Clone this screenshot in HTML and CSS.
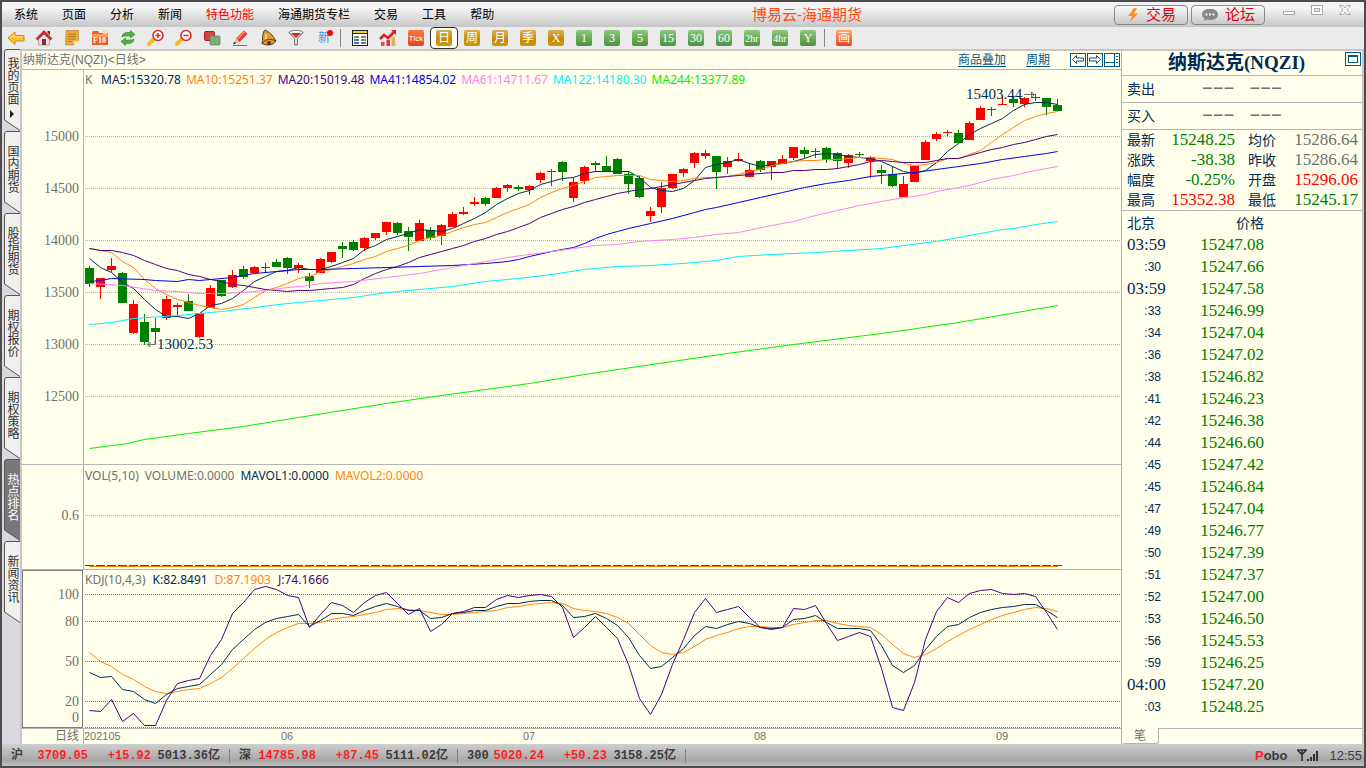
FILE: index.html
```html
<!DOCTYPE html>
<html lang="zh-CN">
<head>
<meta charset="utf-8">
<title>博易云-海通期货</title>
<link rel="stylesheet" href="styles.css">
</head>
<body>
<div class="app">
  <header class="titlebar">
    <nav class="menu">
      <button>系统</button><button>页面</button><button>分析</button><button>新闻</button><button class="hot">特色功能</button><button>海通期货专栏</button><button>交易</button><button>工具</button><button>帮助</button>
    </nav>
    <h1 class="brand">博易云-海通期货</h1>
    <div class="title-right">
      <button class="pill"><svg width="14" height="16" viewBox="0 0 14 16"><path d="M8 1L2 9h4l-2 6 8-8.500H8L11 1z" fill="#f7941d"/></svg>交易</button>
      <button class="pill"><svg width="18" height="14" viewBox="0 0 18 14"><path d="M9 1c5 0 8 2 8 5.500S14 12 9 12c-1 0-2 0-3-.4L3 13l.6-2.500C2 9.500 1 8 1 6.500 1 3 4 1 9 1z" fill="#888"/><path d="M4.500 5.500h2v2h-2zM8 5.500h2v2H8zM11.500 5.500h2v2h-2z" fill="#eee"/></svg>论坛</button>
      <div class="win">
        <button aria-label="最小化"><svg width="14" height="14"><rect x="1.500" y="6.500" width="11" height="3" fill="#fff" stroke="#a8a8a8"/></svg></button>
        <button aria-label="最大化"><svg width="14" height="14"><rect x="1.500" y=".5" width="11" height="9" fill="#fff" stroke="#a8a8a8"/><rect x="4.500" y="3.500" width="5" height="3" fill="#e8e8e8" stroke="#a8a8a8"/></svg></button>
        <button aria-label="关闭"><svg width="14" height="14"><path d="M1.500.5h3.500l2 2.500 2-2.500h3.500L8.800 5l3.700 4.500H9L7 7l-2 2.500H1.500L5.200 5z" fill="#fff" stroke="#a8a8a8"/></svg></button>
      </div>
    </div>
  </header>

  <div class="toolbar">
    <button aria-label="后退"><svg width="18" height="18"><path d="M1 9l7-6v3.500h9v5.500H8v3.500z" fill="#fbc02d" stroke="#c98a12"/><path d="M3 8.500l4-3V8h9" fill="none" stroke="#ffe690"/></svg></button>
    <button aria-label="主页"><svg width="18" height="18"><path d="M3.500 9v7h11V9L9 4z" fill="#e4e4ea" stroke="#aaa"/><path d="M1 9.500L9 1.500l8 8-1.500 1.500L9 5l-6.500 6z" fill="#d8272c" stroke="#8f1515" stroke-width=".6"/><path d="M12.500 2h2.500v4l-2.500-2z" fill="#a31b1b"/><rect x="7" y="10" width="4" height="6" fill="#7c3434"/></svg></button>
    <button aria-label="记事"><svg width="18" height="18"><path d="M3 1.500h12.500v10L11 16H2.500z" fill="#e9ab3c" stroke="#b9802a" stroke-width=".6"/><path d="M15.500 11.500L11 16v-3.500z" fill="#fff0b8"/><path d="M5 5h8M5 7.500h8M5 10h7M5 12.500h4" stroke="#b57c20"/></svg></button>
    <button aria-label="F10"><svg width="18" height="18"><path d="M1 4l1-2h5l1 2h9v12H1z" fill="#ee5d24"/><path d="M12 2l4-1v4h-4z" fill="#ffd98a"/><path d="M1 5h16v3H1z" fill="#ff9b5d"/><text x="2" y="14" class="f10">F10</text></svg></button>
    <button aria-label="刷新"><svg width="18" height="18"><path d="M3 8c0-3 2.500-4.500 6-4.500h2.500V1.500L16 5.500l-4.500 3.500V7H9C6 7 4 7 3 8z" fill="#4db43c" stroke="#2a8220" stroke-width=".6"/><path d="M15 10c0 3-2.500 4.500-6 4.500H6.500v2L2 12.500 6.500 9v2H9c3 0 5 0 6-1z" fill="#4db43c" stroke="#2a8220" stroke-width=".6"/></svg></button>
    <button aria-label="放大"><svg width="18" height="18"><path d="M7 10l-5 5" stroke="#f6bd22" stroke-width="4" stroke-linecap="round"/><circle cx="11" cy="6.500" r="5" fill="#fff" stroke="#d92a2a" stroke-width="1.600"/><path d="M8.500 6.500h5M11 4v5" stroke="#d92a2a" stroke-width="1.500"/></svg></button>
    <button aria-label="缩小"><svg width="18" height="18"><path d="M7 10l-5 5" stroke="#f6bd22" stroke-width="4" stroke-linecap="round"/><circle cx="11" cy="6.500" r="5" fill="#fff" stroke="#d92a2a" stroke-width="1.600"/><path d="M8.500 6.500h5" stroke="#d92a2a" stroke-width="1.500"/></svg></button>
    <button aria-label="叠加"><svg width="18" height="18"><rect x="1.500" y="2.500" width="10" height="9" rx="1" fill="#d9433f" stroke="#9e2422"/><rect x="7" y="7" width="10" height="9" rx="1" fill="#7dab7c" stroke="#5b8a5b" stroke-width=".8"/></svg></button>
    <button aria-label="画线"><svg width="18" height="18"><path d="M5 9.500L13 1.500l3.500 3.500-8 8z" fill="#e53a2c"/><path d="M6 10.500l8-8" stroke="#ff8c7a" stroke-width="1.500"/><path d="M5 9.500l3.500 3.500L2.500 15.500z" fill="#e8c48e"/><path d="M2 15.500l1.500-3 1.500 2z" fill="#333"/><path d="M2 16.500h14" stroke="#e44"/></svg></button>
    <button aria-label="预警"><svg width="18" height="18"><path d="M5 2c1-1.500 3-1 3 .5 4 1 6 5 9 9.500-3 4.500-9 5-14 2.500C4 11 3 6 5 2z" fill="#dd9a35" stroke="#6b3c10"/><path d="M3 14.500c4-5 9-5 14-2.500" fill="none" stroke="#6b3c10"/><circle cx="10" cy="14" r="2" fill="#6b2d0e"/><path d="M7 5v5" stroke="#ffe2a0" stroke-width="1.500"/></svg></button>
    <button aria-label="筛选"><svg width="18" height="18"><path d="M2 3.500l5.500 6V16h3V9.500l5.500-6z" fill="#d8d8dc" stroke="#777"/><ellipse cx="9" cy="3.500" rx="7" ry="2" fill="#fff" stroke="#777"/><path d="M4.500 4h9L9 9z" fill="#e0202a"/></svg></button>
    <button class="new" aria-label="新功能">新</button>
    <i class="sep"></i>
    <button aria-label="报价表"><svg width="18" height="18"><rect x="1.500" y="1.500" width="15" height="15" fill="#fff" stroke="#222"/><path d="M2 3h14" stroke="#f5cf32" stroke-width="2"/><path d="M2 4.500h14" stroke="#222"/><path d="M3 8h5M10 11h5" stroke="#1a8c1a" stroke-width="1.500"/><path d="M10 8h5" stroke="#d22" stroke-width="1.500"/><path d="M3 11h5M3 14h5M10 14h5" stroke="#224a9e" stroke-width="1.500"/></svg></button>
    <button aria-label="走势"><svg width="18" height="18"><path d="M1 10l4-4 4 3 7-7" fill="none" stroke="#e02020" stroke-width="2.500"/><path d="M12 1h5v5z" fill="#e02020"/><rect x="2" y="13" width="3.500" height="4" fill="#e05030"/><rect x="7.500" y="11" width="3.500" height="6" fill="#d43a3a"/><rect x="12.500" y="8" width="3.500" height="9" fill="#e8b040"/></svg></button>
    <button><span class="tile tick">Tick</span></button>
    <button class="on"><span class="tile gold">日</span></button>
    <button><span class="tile gold">周</span></button>
    <button><span class="tile gold">月</span></button>
    <button><span class="tile gold">季</span></button>
    <button><span class="tile gold num">X</span></button>
    <button><span class="tile green num">1</span></button>
    <button><span class="tile green num">3</span></button>
    <button><span class="tile green num">5</span></button>
    <button><span class="tile green num">15</span></button>
    <button><span class="tile green num">30</span></button>
    <button><span class="tile green num">60</span></button>
    <button><span class="tile green hr">2hr</span></button>
    <button><span class="tile green hr">4hr</span></button>
    <button><span class="tile green num">Y</span></button>
    <i class="sep"></i>
    <button><span class="tile orange">画</span></button>
  </div>

  <main class="body">
    <nav class="side">
      <button class="stab"><svg viewBox="0 0 16 82"><path d="M16 .5H3Q.5.5.5 3v68L16 81.500"/></svg><span>我的页面<i class="tri"></i></span></button>
      <button class="stab"><svg viewBox="0 0 16 82"><path d="M16 .5H3Q.5.5.5 3v68L16 81.500"/></svg><span>国内期货</span></button>
      <button class="stab"><svg viewBox="0 0 16 82"><path d="M16 .5H3Q.5.5.5 3v68L16 81.500"/></svg><span>股指期货</span></button>
      <button class="stab"><svg viewBox="0 0 16 82"><path d="M16 .5H3Q.5.5.5 3v68L16 81.500"/></svg><span>期权报价</span></button>
      <button class="stab"><svg viewBox="0 0 16 82"><path d="M16 .5H3Q.5.5.5 3v68L16 81.500"/></svg><span>期权策略</span></button>
      <button class="stab active"><svg viewBox="0 0 16 82"><path d="M16 .5H3Q.5.5.5 3v68L16 81.500"/></svg><span>热点排名</span></button>
      <button class="stab"><svg viewBox="0 0 16 82"><path d="M16 .5H3Q.5.5.5 3v68L16 81.500"/></svg><span>新闻资讯</span></button>
    </nav>

    <section class="chart">
      <div class="chart-head">
        <span class="name">纳斯达克(NQZI)&lt;日线&gt;</span>
        <a href="#overlay">商品叠加</a>
        <a href="#period">周期</a>
        <div class="boxes">
          <button aria-label="向左"><svg width="16" height="14"><rect x=".5" y=".5" width="15" height="13"/><path d="M2.500 6.500l4-4v2.500h7v3h-7v2.500z"/></svg></button>
          <button aria-label="向右"><svg width="16" height="14"><rect x=".5" y=".5" width="15" height="13"/><path d="M13.500 6.500l-4-4v2.500h-7v3h7v2.500z"/></svg></button>
          <button aria-label="布局"><svg width="16" height="14"><rect x=".5" y=".5" width="15" height="13"/><path d="M10.500 0v14M0 9.500h10M12 3.500h2M12 6.500h2M12 9.500h2"/></svg></button>
        </div>
      </div>

      <div class="pane pane-k">
        <svg class="axis"><text x="57" y="71">15000</text><text x="57" y="123">14500</text><text x="57" y="175">14000</text><text x="57" y="227">13500</text><text x="57" y="279">13000</text><text x="57" y="331">12500</text></svg>
        <div class="plot">
          <div class="legend"><span class="gray k">K</span><span class="navy">MA5:15320.78</span><span class="org">MA10:15251.37</span><span class="ind">MA20:15019.48</span><span class="blue">MA41:14854.02</span><span class="pink">MA61:14711.67</span><span class="cyan">MA122:14180.30</span><span class="lime">MA244:13377.89</span></div>
          <svg class="draw">
            <g class="grid"><path d="M1 48.500H4000M1 100.500H4000M1 152.500H4000M1 204.500H4000M1 256.500H4000M1 308.500H4000"/></g>
            <g id="candles" transform="translate(-84 -88)"></g>
            <g id="ma" class="line" transform="translate(-84 -88)"></g>
            <g transform="translate(-84 -88)" class="mark"><path d="M147 344.500H155V340M147 344.500l3-2.500v5z"/><path d="M1024 94.500H1034M1034.500 94.500l-3-2.500v5z"/><text x="157" y="349">13002.53</text><text x="966" y="99">15403.44</text></g>
          </svg>
        </div>
      </div>

      <div class="pane pane-vol">
        <svg class="axis"><text x="57" y="55">0.6</text></svg>
        <div class="plot">
          <div class="legend"><span class="gray">VOL(5,10)</span><span class="gray">VOLUME:0.0000</span><span class="navy">MAVOL1:0.0000</span><span class="org">MAVOL2:0.0000</span></div>
          <svg class="draw">
            <g class="grid"><path d="M1 30.500H4000"/></g>
            <g id="vol" transform="translate(-84 -485)"></g>
          </svg>
        </div>
      </div>

      <div class="pane pane-kdj">
        <svg class="axis boxed"><text x="56" y="28">100</text><text x="56" y="55">80</text><text x="56" y="95">50</text><text x="56" y="135">20</text><text x="56" y="151">0</text></svg>
        <div class="plot">
          <div class="legend"><span class="gray">KDJ(10,4,3)</span><span class="navy">K:82.8491</span><span class="org">D:87.1903</span><span class="ind">J:74.1666</span></div>
          <svg class="draw">
            <g class="grid dark"><path d="M1 6.500H4000M1 33.500H4000M1 73.500H4000M1 113.500H4000M1 139.500H4000"/></g>
            <g id="kdj" class="line" transform="translate(-84 -588)"></g>
          </svg>
        </div>
      </div>

      <div class="dates">
        <span class="unit">日线</span>
        <svg class="months"><text x="0" y="11">202105</text><text x="197" y="11">06</text><text x="439" y="11">07</text><text x="670" y="11">08</text><text x="912" y="11">09</text></svg>
      </div>
    </section>

    <aside class="quote">
      <div class="q-title"><h2>纳斯达克(NQZI)</h2><button aria-label="最大化面板"><svg width="16" height="14"><rect x=".5" y=".5" width="15" height="13"/><rect x="3.500" y="3.500" width="9" height="7"/><path d="M3 4.500h10"/></svg></button></div>
      <div class="q-side"><span>卖出</span><b>−−−</b><b>−−−</b></div>
      <div class="q-side"><span>买入</span><b>−−−</b><b>−−−</b></div>
      <table class="stats">
        <tr><th>最新</th><td class="dn">15248.25</td><th>均价</th><td>15286.64</td></tr>
        <tr><th>涨跌</th><td class="dn">-38.38</td><th>昨收</th><td>15286.64</td></tr>
        <tr><th>幅度</th><td class="dn">-0.25%</td><th>开盘</th><td class="up">15296.06</td></tr>
        <tr><th>最高</th><td class="up">15352.38</td><th>最低</th><td class="dn">15245.17</td></tr>
      </table>
      <table class="ticks">
        <thead><tr><th>北京</th><th>价格</th></tr></thead>
        <tbody>
        <tr><td>03:59</td><td>15247.08</td></tr>
        <tr><td class="s">:30</td><td>15247.66</td></tr>
        <tr><td>03:59</td><td>15247.58</td></tr>
        <tr><td class="s">:33</td><td>15246.99</td></tr>
        <tr><td class="s">:34</td><td>15247.04</td></tr>
        <tr><td class="s">:36</td><td>15247.02</td></tr>
        <tr><td class="s">:38</td><td>15246.82</td></tr>
        <tr><td class="s">:41</td><td>15246.23</td></tr>
        <tr><td class="s">:42</td><td>15246.38</td></tr>
        <tr><td class="s">:44</td><td>15246.60</td></tr>
        <tr><td class="s">:45</td><td>15247.42</td></tr>
        <tr><td class="s">:45</td><td>15246.84</td></tr>
        <tr><td class="s">:47</td><td>15247.04</td></tr>
        <tr><td class="s">:49</td><td>15246.77</td></tr>
        <tr><td class="s">:50</td><td>15247.39</td></tr>
        <tr><td class="s">:51</td><td>15247.37</td></tr>
        <tr><td class="s">:52</td><td>15247.00</td></tr>
        <tr><td class="s">:53</td><td>15246.50</td></tr>
        <tr><td class="s">:56</td><td>15245.53</td></tr>
        <tr><td class="s">:59</td><td>15246.25</td></tr>
        <tr><td>04:00</td><td>15247.20</td></tr>
        <tr><td class="s">:03</td><td>15248.25</td></tr>
        </tbody>
      </table>
      <div class="q-tabs"><button>笔</button><i></i></div>
    </aside>
  </main>

  <footer class="status">
    <div class="idx"><span class="nm">沪<b>3709.05</b></span><b>+15.92</b><span>5013.36亿</span></div>
    <div class="idx"><span class="nm">深<b>14785.98</b></span><b>+87.45</b><span>5111.02亿</span></div>
    <div class="idx"><span class="nm">300<b>5020.24</b></span><b>+50.23</b><span>3158.25亿</span></div>
    <div class="st-right"><strong><b>P</b>obo</strong><svg width="22" height="14"><path d="M0 1h10M1 1.500l4 4 4-4M5 1v11" fill="none" stroke="#333" stroke-width="1.600"/><path d="M10 10h2v2h-2zM13 8h2v4h-2zM16 5h2v7h-2zM19 2h2v10h-2z" fill="#333"/></svg><time>12:55</time></div>
  </footer>
</div>
<script src="chart.js"></script>
</body>
</html>
```
FILE: styles.css
```css
* { box-sizing: border-box; }
html, body { height: 100%; }
body { margin: 0; font: 12px/1 "Liberation Sans", "Noto Sans CJK SC", sans-serif; color: #003; }
button { border: 0; padding: 0; margin: 0; background: none; font: inherit; color: inherit; display: flex; align-items: center; justify-content: center; }
svg { display: block; }
i { font-style: normal; }

.app { min-height: 100%; display: flex; flex-direction: column; border: 2px solid #4d4b4d; background: #ebebeb; }

.titlebar { height: 25px; display: grid; grid-template-columns: 1fr auto 1fr; align-items: center; background: linear-gradient(#f2f2f2, #f4f4f4 25%, #c6c6c6); }
.menu { display: flex; gap: 24px; padding-left: 12px; color: #000; white-space: nowrap; }
.menu .hot { color: #f00; }
.brand { margin: 0 0 0 248px; font-size: 15px; font-weight: 400; color: #ff4a10; white-space: nowrap; }
.title-right { display: flex; gap: 3px; justify-content: flex-end; padding-right: 4px; }
.pill { width: 74px; height: 20px; gap: 6px; border: 1px solid #888; border-radius: 4px; background: linear-gradient(#fafafa, #c8c8c8); color: #e00010; font-size: 15px; white-space: nowrap; }
.win { display: flex; gap: 14px; margin: 0 8px 0 14px; align-items: flex-start; }

.toolbar { height: 24px; display: flex; align-items: center; background: #ebebeb; border-bottom: 2px solid #ccc4c4; color: #fff; }
.toolbar button { width: 28px; height: 22px; }
.toolbar .on { background: #fff; border: 1px solid #333; border-radius: 4px; }
.toolbar .sep { width: 6px; height: 18px; border-left: 1px solid #888; margin-left: 2px; }
.toolbar .new { position: relative; color: #3c96f0; }
.toolbar .new::after { content: ""; position: absolute; top: 3px; right: 5px; width: 6px; height: 6px; border-radius: 50%; background: #f00; }
.f10 { font: bold 8px "Liberation Serif", serif; fill: #fff; }
.tile { width: 16px; height: 16px; border-radius: 2px; display: flex; align-items: center; justify-content: center; white-space: nowrap; }
.gold { background: linear-gradient(#d8b052, #c48a08 60%, #d09c08); }
.green { background: linear-gradient(#8cc67c, #4e9242); }
.orange { background: linear-gradient(#ffa860, #ee4422); }
.tick { background: linear-gradient(#f47a44, #e8421a); font: 8px "Liberation Sans", sans-serif; }
.num { font: 12px "Liberation Serif", serif; }
.hr { font: 10px "Liberation Serif", serif; }

.body { flex: 1; display: flex; background: #ffffeb; border-right: 2px solid #ccc4c4; }

.side { width: 20px; margin-top: -2px; padding-left: 2px; border-right: 2px solid #ccc4c4; background: #d8d8de; flex: none; }
.stab { position: relative; width: 16px; height: 82px; padding-bottom: 6px; color: #333; }
.stab svg { position: absolute; inset: 0; width: 16px; height: 82px; }
.stab path { fill: #f0f0ec; stroke: #555; }
.stab span { position: relative; writing-mode: vertical-rl; font-size: 12px; line-height: 16px; display: flex; align-items: center; }
.stab.active { color: #fff; }
.stab.active path { fill: #787878; }
.tri { margin-top: 5px; border-left: 4px solid #222; border-top: 4px solid transparent; border-bottom: 4px solid transparent; }

.chart { flex: 1; min-width: 0; display: flex; flex-direction: column; }
.chart-head { height: 19px; border-bottom: 1px solid #b4b4b4; display: flex; align-items: center; gap: 20px; padding: 0 1px; color: #707070; }
.name { flex: 1; font-size: 12px; }
.chart-head a { color: #005a8c; text-underline-offset: 2px; }
.boxes { display: flex; gap: 1px; }
.boxes svg, .q-title svg { fill: none; stroke: #005a8c; }

.pane { display: flex; border-bottom: 1px solid #b4b4b4; }
.pane-k { flex: 1; min-height: 395px; }
.pane-vol { height: 105px; }
.pane-kdj { height: 159px; }
.axis { width: 62px; flex: none; height: auto; border-right: 1px solid #b4b4b4; }
.axis text { font: 14px "Liberation Serif", serif; fill: #707070; text-anchor: end; }
.axis.boxed { width: 61px; border: 1px solid #808080; margin-right: 1px; }
.plot { flex: 1; min-width: 0; display: flex; flex-direction: column; }
.legend { height: 18px; display: flex; align-items: center; gap: 5px; padding-left: 1px; font: 12px "Noto Sans", sans-serif; white-space: nowrap; }
.pane-vol .legend { height: 20px; gap: 6px; }
.pane-kdj .legend { gap: 7px; }
.k { width: 11px; }
.draw { flex: 1; width: 100%; min-height: 0; overflow: visible; clip-path: inset(-20px 0 0 0); }
.gray { color: #707070; } .navy { color: #002b55; } .org { color: #ff8410; } .ind { color: #4b0082; }
.blue { color: #0000f0; } .pink { color: #ff80f0; } .cyan { color: #00f0ff; } .lime { color: #00f000; }
.grid path { stroke: #b4b4b4; stroke-dasharray: 1 1; }
.grid.dark path { stroke: #777; }
.line polyline { fill: none; stroke-width: 1; }
.mark path { stroke: #707070; fill: none; }
.mark text { font: 15px "Liberation Serif", serif; fill: #002b55; }
.dates { height: 15px; display: flex; color: #707070; }
.unit { width: 62px; text-align: right; padding: 1px 4px 0 0; border-right: 1px solid #b4b4b4; }
.months { flex: 1; height: 15px; }
.months text { font: 11px "Liberation Sans", sans-serif; fill: #707070; }

.quote { width: 241px; flex: none; border-left: 1px solid #b4b4b4; display: flex; flex-direction: column; color: #002b55; font-size: 14px; }
.q-title { height: 25px; border-bottom: 1px solid #b4b4b4; display: flex; align-items: flex-start; padding-right: 1px; }
.q-title h2 { flex: 1; margin: 0 0 0 6px; text-align: center; font: bold 19px/24px "Liberation Serif", "Noto Sans CJK SC", serif; }
.q-title button { margin-top: 1px; }
.q-side { height: 27px; border-bottom: 1px solid #b4b4b4; display: flex; align-items: center; padding-left: 5px; }
.q-side b { font: 18px/26px "Liberation Mono", monospace; color: #707070; margin-left: 15px; }
.q-side span + b { margin-left: 47px; }
.stats { border-collapse: collapse; table-layout: fixed; width: 100%; border-bottom: 1px solid #b4b4b4; }
.stats tr { height: 20px; }
.stats th, .stats td { padding: 0; font-weight: 400; text-align: left; }
.stats th:first-child { width: 34px; padding-left: 5px; }
.stats th:nth-child(3) { width: 42px; padding-left: 13px; }
.stats td { text-align: right; font: 17px/20px "Liberation Serif", serif; color: #707070; width: 79px; }
.stats td:last-child { width: auto; padding-right: 4px; }
.stats .up { color: #f00; }
.stats .dn { color: #007d00; }
.ticks { border-collapse: collapse; }
.ticks th { height: 23px; font-weight: 400; padding: 0 98px 0 0; text-align: right; }
.ticks th:first-child { width: 46px; text-align: left; padding: 0 0 0 5px; }
.ticks td { height: 22px; padding: 0; font: 17px/22px "Liberation Serif", serif; }
.ticks td:first-child { padding: 0 0 0 5px; }
.ticks td:last-child { color: #007d00; text-align: right; padding-right: 98px; }
.ticks td.s:first-child { font: 12px/22px "Liberation Sans", sans-serif; text-align: right; padding-right: 7px; }
.q-tabs { margin-top: auto; height: 16px; display: flex; color: #707070; }
.q-tabs button { width: 37px; border: 1px solid #b4b4b4; border-width: 0 1px 1px 0; border-radius: 0 0 3px 3px; font-size: 12px; }
.q-tabs i { flex: 1; border-top: 1px solid #b4b4b4; }

.status { height: 22px; display: flex; align-items: center; padding: 2px 0 0 9px; background: linear-gradient(#cfcfcf, #a6a6a6 75%, #c0c0c0); font: bold 12px/14px "Liberation Mono", "Noto Sans CJK SC", monospace; color: #3c3c3c; }
.status b { color: #ff1e1e; }
.idx { display: grid; grid-template-columns: 77px 63px 69px; width: 219px; margin-right: 9px; border-right: 1px solid #808080; text-align: right; white-space: nowrap; }
.nm { display: flex; justify-content: space-between; }
.st-right { margin-left: auto; display: flex; align-items: center; gap: 10px; padding-right: 2px; font: 13px/14px "Liberation Sans", sans-serif; }
.st-right strong { font-size: 13px; }
```
FILE: chart.js
```js
const NS = "http://www.w3.org/2000/svg";
const X0 = 89, STEP = 11;

// direction, high, body top, body bottom, low
const candles = `G266,268,284,287 R278,278,287,299 R258,266,270,272 G272,273,303,303 R300,304,333,334 G314,322,342,345 G318,328,332,344
R296,299,318,320 R303,305,307,316 G294,301,311,311 R313,313,337,338 R285,288,308,308 G280,280,296,297 R270,275,287,288 G266,269,277,279
R266,267,273,273 G263,267,268,272 G259,262,267,267 G257,258,268,274 R263,265,268,273 G273,276,281,288 R258,259,273,273 R252,252,262,263
G242,246,249,258 G240,242,250,251 R237,238,248,251 R233,233,238,240 R222,222,232,235 G222,223,233,235 G227,231,237,251 R220,223,241,241
G227,230,238,240 R224,225,236,245 R212,214,227,227 R207,212,214,215 R197,202,204,206 G197,198,204,206 R187,188,198,198 R184,185,188,192
G185,187,189,191 R185,186,190,195 R172,173,180,183 R169,171,172,186 G161,162,172,181 R178,182,198,202 R166,167,181,184 G161,163,165,172
G156,166,172,172 G158,159,174,174 G171,174,184,194 G176,178,197,198 R207,211,216,222 R182,188,207,213 R174,174,188,189 R168,169,173,177
R152,153,163,168 R150,153,156,159 G156,156,172,189 R157,161,167,174 R153,159,161,162 R163,170,177,177 G160,161,170,172 R161,161,167,180
R155,159,164,164 R147,147,158,160 G147,150,154,158 R148,151,152,158 G147,148,160,163 G152,153,161,169 R154,155,163,168 G152,154,155,157
R156,157,161,178 G165,170,173,184 G167,174,186,187 R176,184,197,197 R165,166,182,182 R140,142,160,160 R132,134,139,141 R130,132,133,136
G130,133,143,143 R121,123,140,140 R106,108,120,120 G107,109,110,116 R96,104,105,105 G96,99,103,107 R97,98,104,107 G94,97,98,101
G98,98,107,115 G99,105,111,111`.split(/\s+/);

function rect(parent, x, y, w, h, fill) {
  const r = document.createElementNS(NS, "rect");
  Object.entries({ x, y, width: w, height: h, fill }).forEach(([k, v]) => r.setAttribute(k, v));
  parent.appendChild(r);
}

// "y y y ..." gives one value per bar; "bar:y bar:y ..." gives only the turning points
function line(parent, stroke, data) {
  const p = document.createElementNS(NS, "polyline");
  const pts = data.trim().split(/\s+/).map((s, i) => {
    const [a, b] = s.split(":");
    const bar = b === undefined ? i : +a;
    const y = b === undefined ? +a : +b;
    return (X0 + bar * STEP + 0.5) + "," + (y + 0.5);
  });
  p.setAttribute("points", pts.join(" "));
  p.setAttribute("stroke", stroke);
  parent.appendChild(p);
}

const cg = document.getElementById("candles");
const vg = document.getElementById("vol");
candles.forEach((c, i) => {
  const [hi, top, bot, lo] = c.slice(1).split(",").map(Number);
  const color = c[0] === "R" ? "#ff0000" : "#008000";
  const x = X0 + i * STEP;
  rect(cg, x, hi, 1, Math.max(lo - hi, 1), color);
  rect(cg, x - 4, top, 9, Math.max(bot - top, 1), color);
  rect(vg, x - 4, 565, 9, 1, color);
});
rect(vg, X0, 566, 969, 1, "#ff8000");

const ma = document.getElementById("ma");
line(ma, "#002b55", `258 267 272 282 288 299 309 316 316 318 313 305 303 298 290 281 276 271 270 267 269 269 266 262 258 249 245 239 236 233 229 230 231 228 223 218 212 204 198 193 190 184 181 178 177 173 171 171 171 171 177 187 190 191 188 180 167 164 162 159 163 166 164 163 161 158 154 153 154 156 157 158 161 166 171 173 170 162 151 143 134 128 123 118 110 104 102 102 104`);
line(ma, "#ff8410", `248 250 252 261 267 279 288 294 299 302 305 307 309 307 304 297 290 287 283 278 276 271 269 266 263 259 256 251 248 245 240 237 235 231 227 224 222 217 212 208 204 197 192 188 185 181 177 176 175 175 175 179 180 181 180 178 177 177 176 174 171 169 165 163 161 160 160 159 159 158 157 157 158 159 163 165 164 162 158 158 154 150 142 134 127 120 116 113 111`);
line(ma, "#4b0082", `248 250 250 252 255 260 264 268 270 274 276 279 281 284 285 287 289 290 291 290 290 289 288 287 284 278 273 269 266 262 257 254 251 248 245 241 238 234 231 227 223 217 213 209 206 202 199 196 193 191 189 188 186 184 182 180 178 177 176 175 174 173 172 172 170 170 169 169 168 166 164 161 160 161 162 162 162 160 158 158 155 152 149 147 144 142 139 136 134`);
line(ma, "#0000f0", `0:281 1:280 2:278 5:279 6:280 8:281 9:279 10:280 13:277 15:273 17:271 19:269 21:269 24:268 27:267 30:266 33:265 36:263 38:261 39:259 40:256 42:251 44:247 45:243 46:238 47:234 48:231 49:228 51:223 53:218 55:212 56:209 57:207 59:202 61:197 63:192 65:187 67:183 69:180 71:176 73:174 75:172 77:169 79:166 81:163 83:159 85:156 87:153 88:151`);
line(ma, "#ff80f0", `0:283 3:285 6:290 8:291 10:293 12:293 14:292 16:290 18:287 20:285 21:283 24:281 27:277 30:273 32:269 34:265 36:261 38:257 40:254 42:251 44:248 46:245 48:244 50:241 53:239 55:237 57:234 59:232 62:225 64:221 66:215 68:210 70:205 72:201 74:197 75:196 76:194 77:191 79:187 80:185 82:179 84:175 86:170 88:166`);
line(ma, "#00f0ff", `0:324 2:322 4:318 8:315 12:311 15:307 18:303 21:300 24:297 27:292 30:289 33:286 36:281 39:278 42:274 45:269 48:266 51:265 54:263 57:260 59:256 62:254 66:252 69:250 72:248 74:245 77:241 79:237 81:233 83:229 84:228 86:224 88:221`);
line(ma, "#00f000", `0:448 2:445 3:444 5:439 7:436 9:433 14:426 19:417 27:403 32:395 40:383 45:374 53:361 58:353 64:344 72:333 79:322 88:305`);

const kdj = document.getElementById("kdj");
line(kdj, "#ff8410", `652 661 666 674 679 686 691 693 691 689 688 683 677 668 658 648 639 632 627 623 623 622 619 617 616 614 612 609 608 609 610 612 614 614 613 612 611 610 607 606 604 603 602 603 608 610 611 613 617 623 634 645 652 654 652 646 639 635 632 628 626 626 627 627 624 622 620 620 623 625 626 627 634 644 653 657 654 648 641 635 629 624 619 615 612 609 607 608 611`);
line(kdj, "#002b55", `672 677 676 689 691 699 703 694 688 686 684 674 664 649 639 629 622 618 616 614 626 620 613 613 615 610 606 603 606 610 610 618 617 613 612 610 610 606 603 603 601 600 600 605 617 616 613 618 625 637 655 668 666 657 648 635 626 628 624 621 623 627 628 627 619 618 615 622 628 628 628 630 645 665 672 665 649 636 626 624 617 612 609 607 606 604 604 610 617`);
line(kdj, "#4b0082", `710 711 699 721 713 725 725 700 683 680 678 655 639 613 602 589 586 589 595 597 627 614 602 605 612 602 595 592 603 614 608 631 624 613 611 607 607 599 595 597 595 594 596 607 637 627 616 627 638 664 698 714 694 664 639 612 598 612 609 606 617 627 629 627 608 609 605 623 640 636 632 636 668 707 710 682 639 611 597 602 593 590 589 593 594 593 596 612 629`);
```
